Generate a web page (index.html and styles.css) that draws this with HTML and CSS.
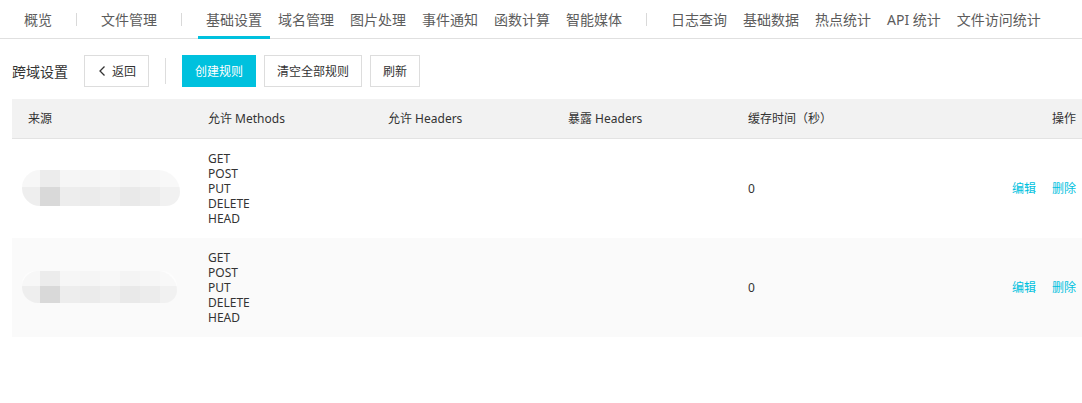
FILE: index.html
```html
<!DOCTYPE html>
<html lang="zh-CN">

<head>
  <meta charset="UTF-8">
  <meta name="viewport" content="width=device-width, initial-scale=1.0">
  <title>跨域设置</title>
  <link rel="stylesheet" href="styles.css">
</head>

<body>
  <nav class="tabs">
    <a class="tab" href="#">概览</a>
    <span class="tab-sep"></span>
    <a class="tab" href="#">文件管理</a>
    <span class="tab-sep"></span>
    <a class="tab active" href="#">基础设置</a>
    <a class="tab" href="#">域名管理</a>
    <a class="tab" href="#">图片处理</a>
    <a class="tab" href="#">事件通知</a>
    <a class="tab" href="#">函数计算</a>
    <a class="tab" href="#">智能媒体</a>
    <span class="tab-sep"></span>
    <a class="tab" href="#">日志查询</a>
    <a class="tab" href="#">基础数据</a>
    <a class="tab" href="#">热点统计</a>
    <a class="tab" href="#">API 统计</a>
    <a class="tab" href="#">文件访问统计</a>
  </nav>

  <div class="toolbar">
    <h2 class="page-title">跨域设置</h2>
    <button class="btn">
      <svg class="chevron" viewBox="0 0 6 10" width="6" height="10">
        <polyline points="5.5,0.5 1,5 5.5,9.5" />
      </svg>
      返回
    </button>
    <span class="toolbar-sep"></span>
    <button class="btn btn-primary">创建规则</button>
    <button class="btn">清空全部规则</button>
    <button class="btn">刷新</button>
  </div>

  <table class="cors-table">
    <thead>
      <tr>
        <th>来源</th>
        <th>允许 Methods</th>
        <th>允许 Headers</th>
        <th>暴露 Headers</th>
        <th>缓存时间（秒）</th>
        <th class="col-ops">操作</th>
      </tr>
    </thead>
    <tbody>
      <tr>
        <td><div class="masked" aria-hidden="true"></div></td>
        <td class="methods">GET<br>POST<br>PUT<br>DELETE<br>HEAD</td>
        <td></td>
        <td></td>
        <td>0</td>
        <td class="col-ops"><a class="link" href="#">编辑</a><a class="link" href="#">删除</a></td>
      </tr>
      <tr class="striped">
        <td><div class="masked short" aria-hidden="true"></div></td>
        <td class="methods">GET<br>POST<br>PUT<br>DELETE<br>HEAD</td>
        <td></td>
        <td></td>
        <td>0</td>
        <td class="col-ops"><a class="link" href="#">编辑</a><a class="link" href="#">删除</a></td>
      </tr>
    </tbody>
  </table>
</body>

</html>
```

FILE: styles.css
```css
:root {
  --primary: #00c1de;
  --border: #dddddd;
  --text: #333333;
  --nav-text: #5c5c5c;
}

* {
  margin: 0;
  padding: 0;
  box-sizing: border-box;
}

body {
  font-family: "Noto Sans", "Noto Sans CJK SC", sans-serif;
  color: var(--text);
  background: #fff;
  overflow: hidden;
}

/* top tabs */
.tabs {
  display: flex;
  align-items: center;
  height: 39px;
  padding-left: 16px;
  border-bottom: 1px solid #e0e0e0;
}

.tab {
  display: flex;
  align-items: center;
  height: 39px;
  padding: 3px 8px 1px;
  font-size: 14px;
  color: var(--nav-text);
  text-decoration: none;
  border-bottom: 3px solid transparent;
  margin-bottom: -1px;
}

.tab.active {
  border-bottom-color: var(--primary);
}

.tab-sep {
  width: 1px;
  height: 13px;
  margin: 0 16px;
  background: #d9d9d9;
}

/* toolbar */
.toolbar {
  display: flex;
  align-items: center;
  gap: 8px;
  padding: 16px 12px 12px;
}

.page-title {
  font-size: 14px;
  font-weight: normal;
  margin-right: 8px;
}

.btn {
  display: inline-flex;
  align-items: center;
  gap: 7px;
  height: 32px;
  padding: 0 12px;
  font-family: inherit;
  font-size: 12px;
  color: var(--text);
  background: #fff;
  border: 1px solid var(--border);
  cursor: pointer;
}

.btn-primary {
  color: #fff;
  background: var(--primary);
  border-color: var(--primary);
}

.chevron {
  fill: none;
  stroke: #333;
  stroke-width: 1.3;
  margin-left: 2px;
}

.toolbar-sep {
  width: 1px;
  height: 26px;
  margin: 0 8px;
  background: var(--border);
}

/* table */
.cors-table {
  width: 1080px;
  margin: 0 12px;
  border-collapse: collapse;
  font-size: 12px;
  table-layout: fixed;
}

.cors-table th {
  height: 39px;
  padding: 0 16px;
  text-align: left;
  font-weight: normal;
  background: #f2f2f2;
  border-bottom: 1px solid #e3e3e3;
}

.cors-table th:nth-child(-n+5) {
  width: 180px;
}

.cors-table td {
  height: 99px;
  padding: 12px 16px;
  vertical-align: middle;
  line-height: 15px;
}

.cors-table .col-ops {
  text-align: right;
}

.striped td {
  height: 98px;
  background: #fafafa;
}

.link {
  color: var(--primary);
  text-decoration: none;
  margin-left: 16px;
}

/* blurred origin */
.masked {
  width: 158px;
  height: 36px;
  margin-left: -6px;
  border-radius: 18px 22px 14px 18px;
  background:
    linear-gradient(90deg,
      #eeeeee 0 18px, #d9d9d9 18px 38px, #ededed 38px 58px, #ebebeb 58px 78px,
      #eeeeee 78px 98px, #e9e9e9 98px 118px, #ececec 118px 138px, #f1f1f1 138px);
  filter: blur(0.6px);
}

.masked::before {
  content: "";
  display: block;
  height: 48%;
  border-radius: 18px 22px 0 0;
  background: rgba(255, 255, 255, 0.5);
}

.masked.short {
  width: 155px;
  height: 32px;
}
```
